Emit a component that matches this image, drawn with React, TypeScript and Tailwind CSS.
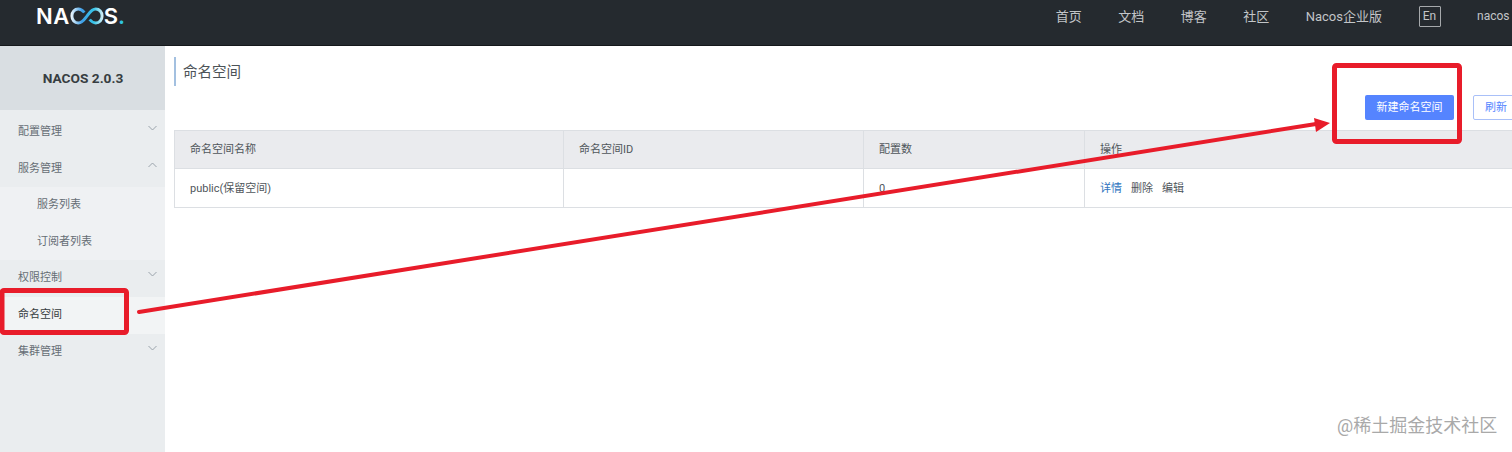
const FONT = "font-['Roboto','Noto_Sans_CJK_SC',sans-serif]";

const topNav = ["首页", "文档", "博客", "社区", "Nacos企业版"];

const menu = [
  { label: "配置管理", arrow: "down" },
  { label: "服务管理", arrow: "up" },
  { label: "服务列表", sub: true },
  { label: "订阅者列表", sub: true },
  { label: "权限控制", arrow: "down" },
  { label: "命名空间", active: true },
  { label: "集群管理", arrow: "down" },
];

function Chevron({ dir }: { dir: string }) {
  return (
    <svg width="9" height="6" viewBox="0 0 9 6" fill="none" className="absolute right-[8px] top-[11px]">
      <path
        d={dir === "up" ? "M0.5 5 L4.5 1 L8.5 5" : "M0.5 1 L4.5 5 L8.5 1"}
        stroke="#9aa3ab"
        strokeWidth="1"
      />
    </svg>
  );
}

function Logo() {
  return (
    <div className="flex items-center font-['Inter',sans-serif] text-[22px] leading-[24px] font-semibold text-white">
      <span className="tracking-[0.5px]">NA</span>
      <svg width="34" height="18" viewBox="0 0 32 18" fill="none" preserveAspectRatio="none">
        <defs>
          <linearGradient id="loop" x1="0" y1="0" x2="32" y2="0" gradientUnits="userSpaceOnUse">
            <stop offset="0" stopColor="#ffffff" />
            <stop offset="0.35" stopColor="#3f9fe8" />
            <stop offset="0.7" stopColor="#36c5e8" />
            <stop offset="1" stopColor="#e8f4f8" />
          </linearGradient>
        </defs>
        <path
          d="M13.5 5.5 C11.5 3 9.8 2 7.8 2 C4.4 2 1.8 5 1.8 9 C1.8 13 4.4 16 7.8 16 C11.5 16 13.5 12.5 16 9 C18.5 5.5 20.5 2 24.2 2 C27.6 2 30.2 5 30.2 9 C30.2 13 27.6 16 24.2 16 C22.2 16 20.5 15 18.5 12.5"
          stroke="url(#loop)"
          strokeWidth="2.8"
        />
      </svg>
      <span>S</span>
      <span className="text-[#2fc4e0]">.</span>
    </div>
  );
}

// red annotations drawn on top of the screenshot
function Annotation() {
  return (
    <svg width="1512" height="452" viewBox="0 0 1512 452" fill="none" className="absolute left-0 top-0 pointer-events-none">
      <rect x="2" y="290.5" width="124.5" height="42" rx="2" stroke="#e81c2a" strokeWidth="5" />
      <rect x="1334.5" y="65.5" width="125" height="76" rx="2" stroke="#e81c2a" strokeWidth="5" />
      <path d="M139 312 L1316 124" stroke="#e81c2a" strokeWidth="4" strokeLinecap="round" />
      <path d="M1330 123 L1314 118 L1316 132 Z" fill="#e81c2a" />
    </svg>
  );
}

export default function App() {
  return (
    <div className={`relative w-[1512px] h-[452px] overflow-hidden bg-white ${FONT}`}>
      <header className="flex h-[46px] items-start bg-[#252a2f] border-b border-[#15181b] pl-[36px]">
        <div className="pt-[4px]">
          <Logo />
        </div>
        <nav className="ml-auto flex items-center gap-[36.5px] pt-[6px] text-[13px] leading-[21px] text-[#c2c5c8]">
          {topNav.map((t) => (
            <span key={t}>{t}</span>
          ))}
          <span className="flex h-[21px] w-[22px] items-center justify-center border border-[#a6a9ac] rounded-[1px] text-[12px]">
            En
          </span>
          <span className="w-[35px] whitespace-nowrap text-[12px]">nacos</span>
        </nav>
      </header>

      <div className="flex h-[406px]">
        <aside className="w-[165px] shrink-0 bg-[#eaedef]">
          <div className="flex h-[64px] items-center justify-center bg-[#d9dee2] text-[13.7px] font-bold text-[#373d41] pl-[1px]">
            NACOS 2.0.3
          </div>
          <ul className="pt-[4px] text-[11px] text-[#666e75]">
            {menu.map((m) => (
              <li
                key={m.label}
                className={`relative flex h-[36.6px] items-center ${m.sub ? "pl-[37px] bg-[#eff1f3]" : "pl-[18px]"} ${m.active ? "bg-[#f2f4f5] text-[#373d41]" : ""}`}
              >
                {m.label}
                {m.arrow && <Chevron dir={m.arrow} />}
              </li>
            ))}
          </ul>
        </aside>

        <main className="w-[1360px] shrink-0 pl-[9px] pr-[4px] pt-[11px]">
          <h1 className="h-[29px] border-l-2 border-[#a3c0e0] pl-[7px] pt-[1px] text-[14.5px] leading-[29px] text-[#4c5358]">
            命名空间
          </h1>
          <div className="mt-[9px] flex h-[25px] justify-end gap-[19px] text-[11px]">
            <button className="w-[89px] rounded-[2px] bg-[#5584ff] pt-[2px] text-white">新建命名空间</button>
            <button className="w-[48px] rounded-[2px] border border-[#a9c0f8] bg-white text-left pl-[11px] pt-[2px] text-[#5584ff]">
              刷新
            </button>
          </div>
          <div className="mt-[10px] border border-[#dcdfe3] text-[11px] text-[#4f565b]">
            <div className="grid h-[38px] grid-cols-[388px_300px_221px_1fr] bg-[#eaebee] border-b border-[#dcdfe3]">
              <div className="flex items-center pl-[15px] pt-[2px]">命名空间名称</div>
              <div className="flex items-center pl-[15px] pt-[2px] border-l border-[#dcdfe3]">命名空间ID</div>
              <div className="flex items-center pl-[15px] pt-[2px] border-l border-[#dcdfe3]">配置数</div>
              <div className="flex items-center pl-[15px] pt-[2px] border-l border-[#dcdfe3]">操作</div>
            </div>
            <div className="grid h-[38px] grid-cols-[388px_300px_221px_1fr]">
              <div className="flex items-center pl-[15px] pt-[2px]">public(保留空间)</div>
              <div className="border-l border-[#dcdfe3]" />
              <div className="flex items-center pl-[15px] pt-[2px] border-l border-[#dcdfe3]">0</div>
              <div className="flex items-center gap-[9px] pl-[15px] pt-[2px] border-l border-[#dcdfe3]">
                <span className="text-[#2f74c0]">详情</span>
                <span>删除</span>
                <span>编辑</span>
              </div>
            </div>
          </div>
        </main>
      </div>

      <Annotation />
      <span className="absolute left-[1337px] top-[414px] text-[18px] leading-[24px] whitespace-nowrap text-[#a9a9a9]">
        @稀土掘金技术社区
      </span>
    </div>
  );
}
